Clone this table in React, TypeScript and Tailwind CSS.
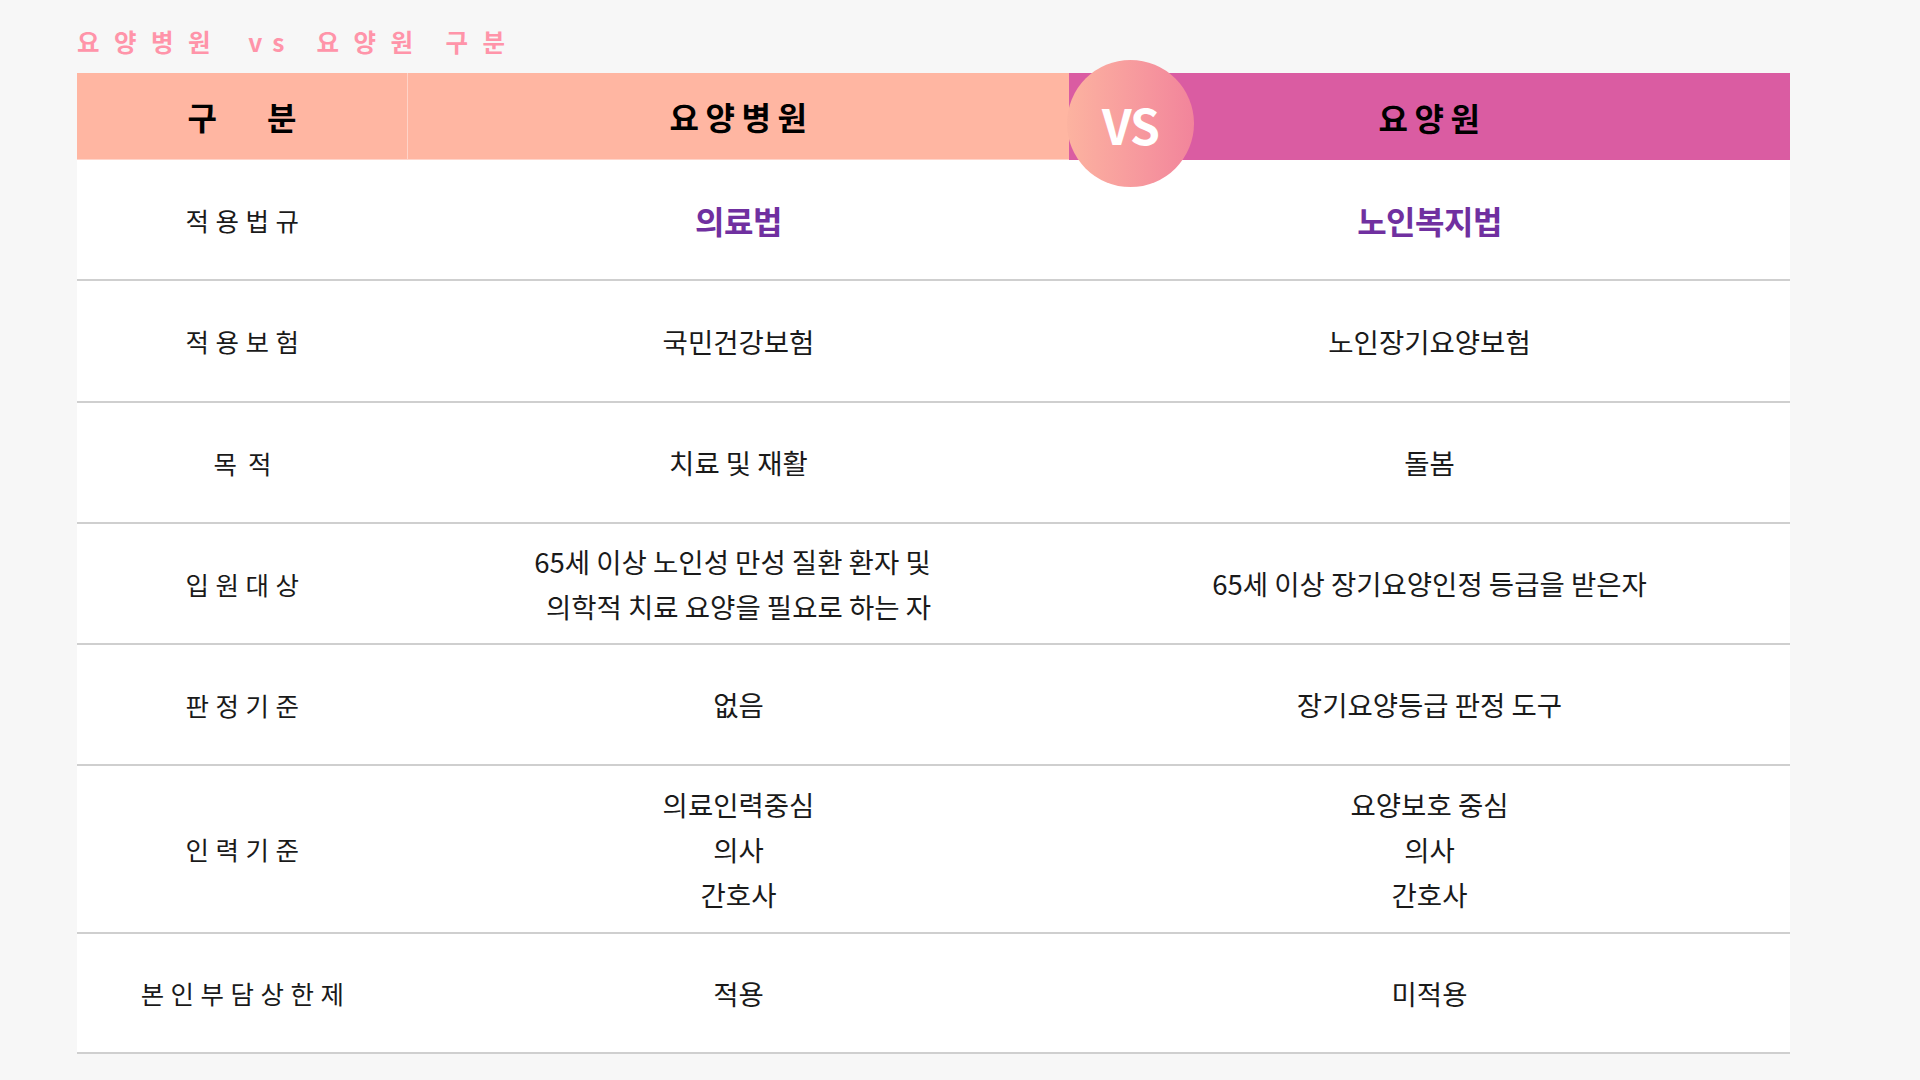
import React from "react";

const F = '"Noto Sans CJK KR", "Noto Sans", sans-serif';

type Row = {
  label: string;
  labelCls?: string;
  h: string;
  left: React.ReactNode;
  right: React.ReactNode;
};

const Body = ({ lines, firstPad }: { lines: string[]; firstPad?: boolean }) => (
  <div className="flex flex-col items-center text-[27.5px] leading-[45px] text-[#1a1a1a]">
    {lines.map((l, i) => (
      <div key={i} className={`whitespace-nowrap ${firstPad && i === 0 ? "pr-[12px]" : ""}`}>
        {l}
      </div>
    ))}
  </div>
);

const Law = ({ t }: { t: string }) => (
  <div className="text-[32px] font-bold leading-[40px] text-[#7030a0] tracking-[-0.5px]">{t}</div>
);

const rows: Row[] = [
  { label: "적용법규", h: "h-[121px]", left: <Law t="의료법" />, right: <Law t="노인복지법" /> },
  { label: "적용보험", h: "h-[122px]", left: <Body lines={["국민건강보험"]} />, right: <Body lines={["노인장기요양보험"]} /> },
  { label: "목적", labelCls: "tracking-[11px] pl-[11px]", h: "h-[121px]", left: <Body lines={["치료 및 재활"]} />, right: <Body lines={["돌봄"]} /> },
  {
    label: "입원대상",
    h: "h-[121px]",
    left: <Body firstPad lines={["65세 이상 노인성 만성 질환 환자 및", "의학적 치료 요양을 필요로 하는 자"]} />,
    right: <Body lines={["65세 이상 장기요양인정 등급을 받은자"]} />,
  },
  { label: "판정기준", h: "h-[121px]", left: <Body lines={["없음"]} />, right: <Body lines={["장기요양등급 판정 도구"]} /> },
  {
    label: "인력기준",
    h: "h-[168px]",
    left: <Body lines={["의료인력중심", "의사", "간호사"]} />,
    right: <Body lines={["요양보호 중심", "의사", "간호사"]} />,
  },
  { label: "본인부담상한제", h: "h-[120px]", left: <Body lines={["적용"]} />, right: <Body lines={["미적용"]} /> },
];

export default function App() {
  return (
    <div className="w-[1920px] h-[1080px] bg-[#f7f7f7] overflow-hidden" style={{ fontFamily: F }}>
      <div className="pl-[77px] pt-[22px]">
        <div className="h-[41px] flex items-center text-[24.5px] font-bold text-[#ff94a9] whitespace-nowrap leading-none">
          <span className="tracking-[14.5px]">요양병원</span>
          <span className="ml-[23px] tracking-[10px]">vs</span>
          <span className="ml-[22px] tracking-[14.5px]">요양원</span>
          <span className="ml-[18px] tracking-[14.5px]">구분</span>
        </div>

        <div className="relative mt-[10px] w-[1713px]">
          {/* header */}
          <div className="grid grid-cols-[331px_661px_721px] h-[87px]">
            <div className="bg-[#ffb6a2] border-r border-[#ffd3c8] border-b border-b-[#ffd5cb] flex items-center justify-center text-[32px] font-bold text-black">
              <span>구</span>
              <span className="ml-[50px]">분</span>
            </div>
            <div className="bg-[#ffb6a2] border-b border-[#ffd5cb] flex items-center justify-center text-[32px] font-bold text-black tracking-[6.5px] pl-[6px]">
              요양병원
            </div>
            <div className="bg-[#da5ca2] flex items-center justify-center text-[32px] font-bold text-black tracking-[6.5px] pl-[6px]">
              요양원
            </div>
          </div>

          {/* body */}
          <div className="bg-white">
            {rows.map((r, i) => (
              <div
                key={i}
                className={`grid grid-cols-[331px_661px_721px] ${r.h} border-b-2 border-[#cfcfcf]`}
              >
                <div className="flex items-center justify-center">
                  <span
                    className={`text-[25.5px] leading-[36px] text-[#1a1a1a] whitespace-nowrap ${
                      r.labelCls ?? "tracking-[6.5px] pl-[6px]"
                    }`}
                  >
                    {r.label}
                  </span>
                </div>
                <div className="flex items-center justify-center">{r.left}</div>
                <div className="flex items-center justify-center">{r.right}</div>
              </div>
            ))}
          </div>

          {/* VS badge */}
          <div className="absolute left-[990px] top-[-13px] w-[127px] h-[127px] rounded-full bg-gradient-to-r from-[#fcb3a0] to-[#f2849b] flex items-center justify-center">
            <span className="text-[48px] font-bold text-white leading-none tracking-[-1px]">VS</span>
          </div>
        </div>
      </div>
    </div>
  );
}
